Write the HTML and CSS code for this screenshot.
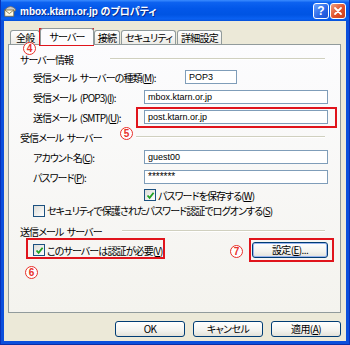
FILE: index.html
```html
<!DOCTYPE html>
<html lang="ja">
<head>
<meta charset="utf-8">
<title>プロパティ</title>
<link rel="stylesheet" href="styles.css">
</head>
<body>
<div class="window">
  <div class="titlebar">
    <svg class="ticon" width="13" height="13" viewBox="0 0 13 13">
      <path d="M1.5 5 Q6.5 0 11.5 5 L11.5 7 L1.5 7 Z" fill="#c9c9c9" stroke="#6d6d6d" stroke-width="0.8"/>
      <rect x="0.8" y="6" width="9" height="6.2" fill="#fffbe6" stroke="#7a6a3a" stroke-width="0.8"/>
      <path d="M0.8 6 L5.3 9.6 L9.8 6" fill="none" stroke="#7a6a3a" stroke-width="0.8"/>
    </svg>
    <span class="title">mbox.ktarn.or.jp のプロパティ</span>
    <div class="tbtns">
      <span class="tbtn help">?</span>
      <span class="tbtn close"><svg width="10" height="10" viewBox="0 0 10 10"><path d="M2 2 L8 8 M8 2 L2 8" stroke="#fff" stroke-width="1.8" stroke-linecap="round"/></svg></span>
    </div>
  </div>
  <div class="client">
    <div class="tabs">
      <div class="tab">全般</div>
      <div class="tab sel">サーバー</div>
      <div class="tab">接続</div>
      <div class="tab">セキュリティ</div>
      <div class="tab">詳細設定</div>
    </div>
    <div class="panel">
      <div class="grp g1"><span class="gl">サーバー情報</span><i class="line"></i></div>
      <div class="row"><span class="lbl">受信メール サーバーの種類(<u>M</u>):</span><div class="field short">POP3</div></div>
      <div class="row"><span class="lbl">受信メール (POP3)(<u>I</u>):</span><div class="field">mbox.ktarn.or.jp</div></div>
      <div class="row"><span class="lbl">送信メール (SMTP)(<u>U</u>):</span><div class="field">post.ktarn.or.jp</div></div>
      <div class="grp g2"><span class="gl">受信メール サーバー</span><i class="line"></i></div>
      <div class="row"><span class="lbl">アカウント名(<u>C</u>):</span><div class="field">guest00</div></div>
      <div class="row"><span class="lbl">パスワード(<u>P</u>):</span><div class="field pw">*******</div></div>
      <div class="crow c1"><span class="cb on"><svg width="9" height="9" viewBox="0 0 9 9"><path d="M1.5 4.5 L3.6 6.8 L7.6 1.8" fill="none" stroke="#21a121" stroke-width="1.8"/></svg></span>パスワードを保存する(<u>W</u>)</div>
      <div class="crow c2"><span class="cb"></span>セキュリティで保護されたパスワード認証でログオンする(<u>S</u>)</div>
      <div class="grp g3"><span class="gl">送信メール サーバー</span><i class="line"></i></div>
      <div class="brow">
        <div class="crow c3"><span class="cb on"><svg width="9" height="9" viewBox="0 0 9 9"><path d="M1.5 4.5 L3.6 6.8 L7.6 1.8" fill="none" stroke="#21a121" stroke-width="1.8"/></svg></span>このサーバーは認証が必要(<u>V</u>)</div>
        <button class="btn def">設定(<u>E</u>)...</button>
      </div>
    </div>
    <div class="buttons">
      <button class="btn">OK</button>
      <button class="btn">キャンセル</button>
      <button class="btn">適用(<u>A</u>)</button>
    </div>
  </div>
  <div class="mark box-tab"></div>
  <div class="mark box-smtp"></div>
  <div class="mark box-auth"></div>
  <div class="mark box-set"></div>
  <span class="num n4">4</span>
  <span class="num n5">5</span>
  <span class="num n6">6</span>
  <span class="num n7">7</span>
</div>
</body>
</html>
```

FILE: styles.css
```css
html, body { margin: 0; padding: 0; background: #fff; }
body {
  font-family: "Noto Sans CJK JP", sans-serif;
  font-size: 10px;
  font-feature-settings: "palt";
  letter-spacing: -0.9px;
  word-spacing: 2px;
  color: #000;
}
u { text-decoration: underline; text-underline-offset: 1px; }

.window {
  position: relative;
  width: 350px;
  height: 345px;
  background: #0b4fdc;
  display: flex;
  flex-direction: column;
  box-sizing: border-box;
  border-left: 1px solid #0831b8;
  border-right: 1px solid #0831b8;
  border-bottom: 1px solid #0a2ea8;
  overflow: hidden;
}

.titlebar {
  height: 21px;
  flex: none;
  display: flex;
  align-items: center;
  padding: 0 3px 0 3px;
  background: linear-gradient(#3b8cff 0%, #0d62f0 12%, #0257e9 40%, #0054e3 70%, #0a61f2 90%, #0650d8 100%);
}
.ticon { flex: none; margin-right: 3px; }
.title {
  color: #fff;
  font-family: "Liberation Sans", "Noto Sans CJK JP", sans-serif;
  font-weight: bold;
  font-size: 10px;
  letter-spacing: 0;
  word-spacing: 0;
  text-shadow: 1px 1px 0 #0a2b8a;
  flex: 1;
  white-space: nowrap;
}
.tbtns { display: flex; gap: 1px; }
.tbtn {
  width: 14px;
  height: 14px;
  border: 1px solid #fff;
  border-radius: 3px;
  display: flex;
  align-items: center;
  justify-content: center;
  color: #fff;
  font-family: "Liberation Sans", sans-serif;
  font-weight: bold;
  font-size: 12px;
  letter-spacing: 0;
}
.help { background: linear-gradient(135deg, #6aa2ff, #2a66e6 60%, #1c50d0); }
.close { background: linear-gradient(135deg, #f0a080, #e0502a 55%, #c8401e); }

.client {
  flex: 1;
  margin: 0 3px 3px 3px;
  background: #ece9d8;
  padding: 7px 5px 0 4px;
  display: flex;
  flex-direction: column;
}

.tabs {
  height: 16px;
  display: flex;
  align-items: flex-end;
  padding-left: 2px;
  gap: 1px;
  letter-spacing: -0.8px;
}
.tab {
  height: 13px;
  line-height: 13px;
  padding: 0 3px;
  border: 1px solid #919b9c;
  border-bottom: none;
  border-radius: 3px 3px 0 0;
  background: linear-gradient(#ffffff, #ecebe6);
  white-space: nowrap;
}
.tab:first-child { padding: 0 5px; }
.tab.sel {
  height: 16px;
  line-height: 15px;
  margin: 0 -1px -1px -1px;
  padding: 0 8px;
  background: #fcfcfe;
  position: relative;
  z-index: 1;
}

.panel {
  height: 269px;
  box-sizing: border-box;
  border: 1px solid #919b9c;
  background: linear-gradient(#fcfcfe, #f4f3ee);
  padding: 6px 12px 0 11px;
}

.grp {
  display: flex;
  align-items: center;
  height: 20px;
  margin-right: 3px;
}
.g1 { height: 16px; }
.g3 { margin-top: 3px; }
.gl { flex: none; white-space: nowrap; }
.g1 .gl { width: 90px; }
.g2 .gl { width: 116px; }
.g3 .gl { width: 102px; }
.line {
  flex: 1;
  height: 0;
  border-top: 1px solid #d0d0bf;
  border-bottom: 1px solid #fff;
}

.row {
  display: flex;
  align-items: center;
  height: 20px;
  padding-left: 13px;
}
.lbl { width: 111px; flex: none; white-space: nowrap; }
.field {
  flex: 1;
  height: 12px;
  line-height: 12px;
  border: 1px solid #7f9db9;
  background: #fff;
  padding-left: 3px;
  font-family: "Liberation Sans", sans-serif;
  font-size: 9px;
  letter-spacing: 0;
  word-spacing: 0;
  font-feature-settings: normal;
}
.field.short { flex: none; width: 47px; margin-left: 41px; }
.field.pw { font-size: 10px; }

.crow {
  display: flex;
  align-items: center;
  white-space: nowrap;
}
.c1 { height: 16px; padding-left: 124px; }
.c2 { height: 15px; padding-left: 13px; }
.c3 { padding-left: 13px; }
.cb {
  width: 10px;
  height: 10px;
  flex: none;
  border: 1px solid #1c5180;
  background: linear-gradient(135deg, #dcdcd7, #ffffff);
  margin-right: 2px;
  display: flex;
  align-items: center;
  justify-content: center;
}

.brow {
  height: 18px;
  display: flex;
  align-items: center;
  justify-content: space-between;
}

.btn {
  font-family: "Noto Sans CJK JP", sans-serif;
  font-feature-settings: "palt";
  font-size: 10px;
  letter-spacing: -0.6px;
  color: #000;
  height: 16px;
  width: 70px;
  padding: 0;
  line-height: 14px;
  border: 1px solid #003c74;
  border-radius: 3px;
  background: linear-gradient(#ffffff, #f3f3ef 60%, #e3e2da);
  box-sizing: border-box;
}
.btn.def {
  width: 76px;
  box-shadow: inset 0 0 0 1px #99b4ee;
}

.buttons {
  display: flex;
  justify-content: flex-end;
  gap: 8px;
  margin-top: 8px;
}

.mark {
  position: absolute;
  border: 2px solid #e0141c;
  box-sizing: border-box;
}
.box-tab { left: 38px; top: 28px; width: 55px; height: 18px; }
.box-smtp { left: 135px; top: 107px; width: 201px; height: 21px; }
.box-auth { left: 25px; top: 238px; width: 139px; height: 21px; }
.box-set { left: 248px; top: 238px; width: 85px; height: 24px; }

.num {
  position: absolute;
  width: 11px;
  height: 11px;
  border: 1.5px solid #e8302a;
  border-radius: 50%;
  color: #e8302a;
  font-family: "Liberation Sans", sans-serif;
  font-weight: bold;
  font-size: 10px;
  letter-spacing: 0;
  line-height: 11px;
  text-align: center;
  background: #fff;
}
.n4 { left: 22px; top: 42px; }
.n5 { left: 119px; top: 127px; }
.n6 { left: 24px; top: 266px; }
.n7 { left: 229px; top: 245px; }
```
